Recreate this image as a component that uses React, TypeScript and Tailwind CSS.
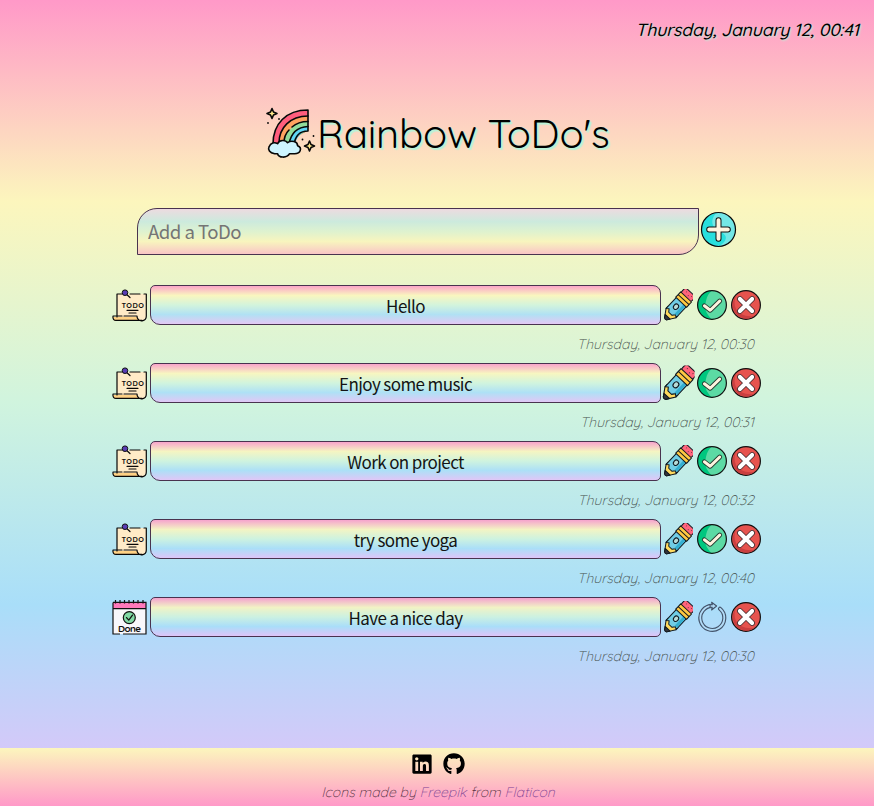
import React from "react";
import { FaLinkedin, FaGithub } from "react-icons/fa";

const quick = "font-['Quicksand','Open_Sans',sans-serif]";

function Rainbow() {
  return (
    <svg viewBox="0 0 50 50" className="mt-1 -ml-px h-[50px] w-[50px] shrink-0 overflow-visible" fill="none">
      <path d="M7 37C7 16 20 2 42 1V22C33 25 28 30 26 38Z" fill="#ff5d7d" />
      <path d="M13 37C13 20 24 7 42 7V22C33 25 28 30 26 38Z" fill="#ffa260" />
      <path d="M18 37C18 23 28 13 42 12.5V22C33 25 28 30 26 38Z" fill="#91dc9b" />
      <path d="M23 37C23 27 31 18 42 17.5V22C35 22 30 29 28 38Z" fill="#5fd5f5" />
      <g stroke="#080808" strokeWidth="1.6" strokeLinejoin="round" strokeLinecap="round">
        <path d="M7 35C7 15 20 1 42 1V22C33 22 29 28 28 36" />
        <path d="M13 34C13 19 24 7 42 7M18 34C18 28 20 24 23 21M26 18C30 14.5 35 12.5 42 12.5M23 35C25 24 32 18 42 17.5" />
        <path d="M7 45C2 44 0 41 1.5 38C3 34 7 33 10 35C12 31 18 31 20 34C24 31 30 33 30 37C35 39 33 45 27 45C24 45 22 45 22 45C19 50 11 49 10 45Z" transform="translate(1.6 -.3)" fill="#cef5ff" />
        <path d="M6 -.5L7.5 3L11 4.5L7.5 6L6 9.5L4.5 6L1 4.5L4.5 3Z" fill="#ffe88b" />
        <path d="M43.5 32L45 35.5L48.5 37L45 38.5L43.5 42L42 38.5L38.5 37L42 35.5Z" fill="#ffe88b" />
      </g>
      <g fill="#080808"><circle cx="2" cy="14" r=".9" /><circle cx="13" cy="10" r=".9" /><circle cx="36.5" cy="30.5" r=".9" /><circle cx="47.5" cy="27" r=".9" /></g>
    </svg>
  );
}

function Note() {
  return (
    <svg viewBox="0 0 35 35" className="h-[35px] w-[35px]" fill="none">
      <path d="M5 5H34V27C34 31 31 32.5 29 32H4C1 32 .7 30 .7 28H5Z" fill="#ffebc7" />
      <path d="M1 28H25C25 30 27 31 28 32H4C2 32 1 30 1 28Z" fill="#ffd184" />
      <g stroke="#080808" strokeWidth="1.2" strokeLinejoin="round" strokeLinecap="round">
        <path d="M10 5H5V28M18 5H28M32 5H34.3V27C34.3 32.5 28 33 26 30C25 29 25 27 25 27H12M10 27H1C.5 30 2 31.4 4 31.4H30M13 4L18 8.5" />
        <path d="M15 21.3H26M17 24H24" />
      </g>
      <circle cx="13" cy="3.7" r="2.8" fill="#593cb4" stroke="#111" />
      <text x="9.4" y="18.6" fill="#111" fontSize="7.4" fontWeight="700" letterSpacing=".5" className="font-['Quicksand',sans-serif]">TODO</text>
    </svg>
  );
}

function Calendar() {
  return (
    <svg viewBox="0 0 35 35" className="h-[35px] w-[35px]" fill="none">
      <path d="M1 2H34V34H1Z" fill="#f8f7fb" />
      <path d="M1 2H34V9H1Z" fill="#ff79ba" />
      <path d="M1 2.4H34V34H11M8 34H1V2.4M1 8.7H34M3.5 0V3.5M8 0V3.5M12.5 0V3.5M17 0V3.5M21.5 0V3.5M26 0V3.5M31 0V3.5" stroke="#111" strokeWidth="1.2" />
      <circle cx="17.3" cy="17.6" r="6" fill="#81d9a5" stroke="#111" strokeWidth="1.2" />
      <path d="M14.5 17.6L16.8 20.1L20.5 15.1" stroke="#111" strokeWidth="1.3" strokeLinecap="round" />
      <text x="6" y="31.6" fill="#111" fontSize="9.8" fontWeight="700" textLength="23" className="font-['Quicksand',sans-serif]">Done</text>
    </svg>
  );
}

function Pencil({ large }: { large: boolean }) {
  return (
    <svg viewBox="0 0 32 32" className={`h-8 w-8 ${large ? "scale-110" : ""}`} fill="none">
      <g transform="translate(.9 .9) rotate(43 16 16) translate(-.6 0) scale(1.03 .96)" stroke="#101820" strokeWidth="1" strokeLinejoin="round">
        <path d="M9.4 24V27L14.5 35.2Q16 36.5 17.5 35.2L22.6 27V24Z" fill="#ffd95e" />
        <path d="M12.7 32.2L14.5 35.2Q16 36.5 17.5 35.2L19.3 32.2Z" fill="#34363c" />
        <path d="M9.4 9H22.6V27L20.3 25L18.2 28H13.8L11.7 25L9.4 27Z" fill="#71cde5" />
        <path d="M19 9.5H22V25L20.3 24.2L19 26Z" fill="#35afd0" stroke="none" />
        <rect x="9.3" y="-2.8" width="13.4" height="8" rx="2.8" fill="#ff647c" />
        <path d="M8.8 4H23.2V7.8H8.8ZM8.8 7.8H23.2V11.6H8.8Z" fill="#ffc843" />
        <ellipse cx="15.3" cy="18.6" rx="2.3" ry="3" fill="#b8dcd9" />
        <path d="M12.6 0H13.1M16.4 1.6H17M19.3 -.2H19.8" />
      </g>
    </svg>
  );
}

function Check() {
  return (
    <svg viewBox="0 0 32 32" className="h-8 w-8" fill="none">
      <circle cx="16" cy="16" r="14.4" fill="#5cdaa4" />
      <path d="M16 1.6C8 2 2 8 1.6 16C2 24 8 30 16 30.4C10 25 8 20 10 12C11 7 13 4 16 1.6Z" fill="#00c77f" />
      <circle cx="16" cy="16" r="14.4" stroke="#111" strokeWidth="1.2" />
      <path d="M8.4 16.8L14.2 21.3L23.7 12" stroke="#243c31" strokeWidth="4.8" strokeLinecap="round" strokeLinejoin="round" />
      <path d="M8.4 16.8L14.2 21.3L23.7 12" stroke="#fff4df" strokeWidth="3" strokeLinecap="round" strokeLinejoin="round" />
    </svg>
  );
}

function Cross() {
  return (
    <svg viewBox="0 0 32 32" className="h-8 w-8" fill="none">
      <circle cx="16" cy="16" r="14.4" fill="#e6534e" stroke="#111" strokeWidth="1.2" />
      <path d="M6 7C1 13 2 21 7 26C11 30 19 31 24 27C15 28 9 25 6 20C4 16 4 11 6 7Z" fill="#ca3f40" />
      <path d="M9.9 10L22.1 22M22.1 10L9.9 22" stroke="#40292c" strokeWidth="5.7" strokeLinecap="round" />
      <path d="M9.9 10L22.1 22M22.1 10L9.9 22" stroke="#fff" strokeWidth="4.2" strokeLinecap="round" />
    </svg>
  );
}

function Redo() {
  return (
    <svg viewBox="0 0 32 32" className="h-8 w-8" fill="none" strokeLinejoin="round" strokeLinecap="round">
      <path d="M24 7.7A12 12 0 1 1 16.5 4.9" stroke="#43536a" strokeWidth="4.1" />
      <path d="M24 7.7A12 12 0 1 1 16.5 4.9" stroke="#b2dcf7" strokeWidth="1.8" />
      <path d="M15.6 1.2L20.6 5L15.6 9L16.2 6.2H14.1V3.8H16.3Z" fill="#b2dcf7" stroke="#43536a" strokeWidth="1.1" />
    </svg>
  );
}

const todos = [
  { text: "Hello", date: "Thursday, January 12, 00:30", done: false },
  { text: "Enjoy some music", date: "Thursday, January 12, 00:31", done: false },
  { text: "Work on project", date: "Thursday, January 12, 00:32", done: false },
  { text: "try some yoga", date: "Thursday, January 12, 00:40", done: false },
  { text: "Have a nice day", date: "Thursday, January 12, 00:30", done: true },
];

export default function App() {
  return (
    <div className="flex h-[806px] w-full flex-col overflow-hidden bg-[linear-gradient(#ff99c8,#fcf6bd,#d0f4de,#a9def9,#e4c1f9)] text-black">
      <header className={`flex h-[60px] shrink-0 justify-end pt-4 pr-[15px] ${quick}`}>
        <time className="text-[17.7px] leading-[26px] font-medium tracking-[-0.17px] whitespace-nowrap italic [text-shadow:1px_1px_2px_#b9f2d8]">Thursday, January 12, 00:41</time>
      </header>
      <h1 className="flex h-[148px] shrink-0 items-start pt-[45px] pl-[267px]">
        <Rainbow />
        <span className="ml-px text-[40px] leading-[56px] tracking-[-0.22px] whitespace-nowrap font-['Quicksand','Lato',sans-serif] [text-shadow:1px_1px_2px_#b9f2d8,2px_2px_1px_#b9f2d8]">Rainbow ToDo's</span>
      </h1>
      <form className="flex h-[77px] shrink-0 items-start pl-[137px]">
        <input aria-label="Add a ToDo" placeholder="Add a ToDo" className="h-[47px] w-[562px] rounded-tl-[20px] rounded-br-[20px] border border-[#49334f] bg-[linear-gradient(#eddbe0,#cceadd_28%,#def2cf_50%,#f8f5be_72%,#f9c5c6)] px-[10px] pb-[3px] font-['Noto_Sans_CJK_JP',sans-serif] text-[18.6px] tracking-[-0.52px] text-black outline-none placeholder:text-[#757575]" />
        <button type="button" aria-label="Add" className="mt-[3px] ml-[1px]">
          <svg viewBox="0 0 37 37" className="h-[37px] w-[37px]" fill="none">
            <circle cx="18.5" cy="18.5" r="17" fill="#74e7e6" />
            <path d="M19 1.5C10 2 2 9 1.5 18C2 28 9 35 19 35.5C31 27 25 23 19 20C13 17 11 12 13 7C14 4 16 2 19 1.5Z" fill="#28dfdd" />
            <circle cx="18.5" cy="18.5" r="17" stroke="#080808" strokeWidth="1.2" />
            <path d="M18.5 9.2V27.8M9.2 18.5H27.8" stroke="#101010" strokeWidth="6" strokeLinecap="round" />
            <path d="M18.5 9.2V27.8M9.2 18.5H27.8" stroke="#fff5df" strokeWidth="4" strokeLinecap="round" />
          </svg>
        </button>
      </form>
      <main className="flex-1">
        {todos.map((todo, i) => (
          <article key={i} className="h-[78px]">
            <div className="flex h-10 items-start pl-[112px]">
              <div className={`w-[38px] shrink-0 ${todo.done ? "mt-[3px]" : "mt-1"}`}>{todo.done ? <Calendar /> : <Note />}</div>
              <div className="flex h-10 w-[511px] shrink-0 items-center justify-center rounded-[5px_8px_5px_10px] border border-[#49334f] bg-[linear-gradient(#ff99c8dd,#fcf6bddd,#d0f4dedd,#a9def9dd,#e4c1f9dd)] pt-[2px] font-['Noto_Sans_CJK_JP',sans-serif] text-[17px] leading-[26px] tracking-[-0.6px] text-[#141414]">{todo.text}</div>
              <div className="mt-1 flex gap-[2px]">
                <Pencil large={i === 1} />
                <span className="ml-px">{todo.done ? <Redo /> : <Check />}</span>
                <Cross />
              </div>
            </div>
            <time className={`flex h-[38px] justify-end pt-[9px] pr-[120px] text-[14px] leading-5 font-light text-[#414b48] italic ${quick}`}>{todo.date}</time>
          </article>
        ))}
      </main>
      <footer className={`flex h-[58px] shrink-0 flex-col items-center bg-[linear-gradient(#fcf6bd,#ff99c8)] ${quick}`}>
        <div className="flex h-[34px] items-start gap-[10px] pt-[5px] pl-[1px]">
          <FaLinkedin size={22} />
          <FaGithub size={22} />
        </div>
        <p className="pl-[2px] text-[14px] leading-5 font-light text-[#54303f] italic">Icons made by <a className="text-[#7b3f93]">Freepik</a> from <a className="text-[#7b3f93]">Flaticon</a></p>
      </footer>
    </div>
  );
}
